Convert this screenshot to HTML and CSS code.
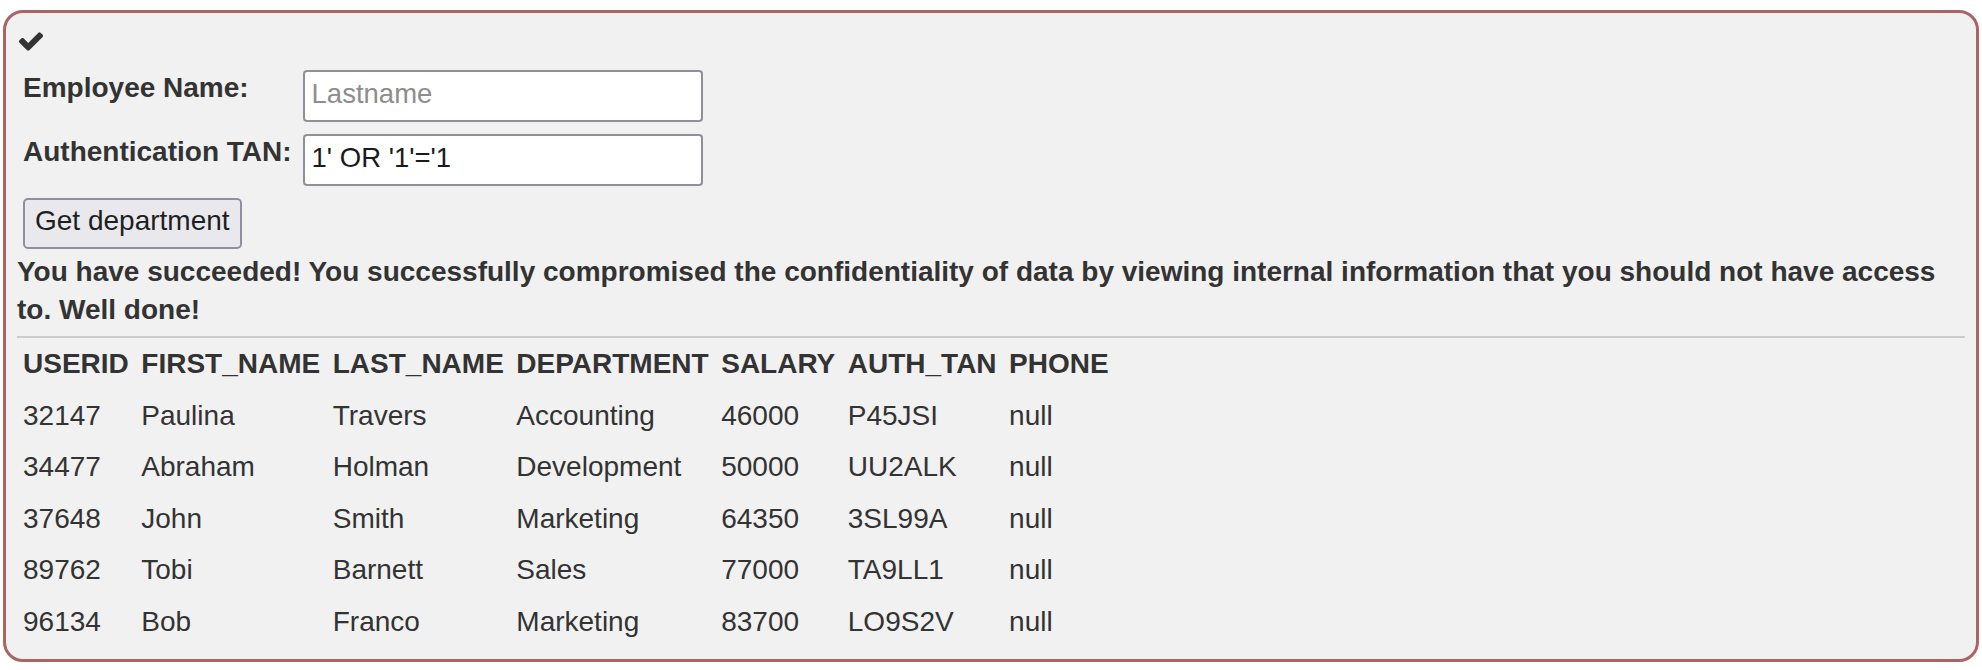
FILE: index.html
```html
<!DOCTYPE html>
<html>
<head>
<meta charset="utf-8">
<link rel="stylesheet" href="styles.css">
</head>
<body>
<div class="attack-container">
  <div class="status">
    <svg class="check" width="28" height="28" viewBox="0 0 1792 1792"><path fill="#333" d="M1671 566q0 40-28 68l-724 724-136 136q-28 28-68 28t-68-28l-136-136-362-362q-28-28-28-68t28-68l136-136q28-28 68-28t68 28l294 295 656-657q28-28 68-28t68 28l136 136q28 28 28 68z"/></svg>
  </div>
  <form class="attack-form">
    <table class="form-table">
      <tr>
        <td class="label-cell"><label>Employee Name:</label></td>
        <td class="input-cell"><input type="text" placeholder="Lastname"></td>
      </tr>
      <tr>
        <td class="label-cell"><label>Authentication TAN:</label></td>
        <td class="input-cell"><input type="text" value="1' OR '1'='1"></td>
      </tr>
      <tr>
        <td class="button-cell"><button type="button">Get department</button></td>
      </tr>
    </table>
  </form>
  <div class="attack-feedback">You have succeeded! You successfully compromised the confidentiality of data by viewing internal information that you should not have access to. Well done!</div>
  <div class="attack-output">
    <hr class="divider">
    <table class="results">
      <tr><th>USERID</th><th>FIRST_NAME</th><th>LAST_NAME</th><th>DEPARTMENT</th><th>SALARY</th><th>AUTH_TAN</th><th>PHONE</th></tr>
      <tr><td>32147</td><td>Paulina</td><td>Travers</td><td>Accounting</td><td>46000</td><td>P45JSI</td><td>null</td></tr>
      <tr><td>34477</td><td>Abraham</td><td>Holman</td><td>Development</td><td>50000</td><td>UU2ALK</td><td>null</td></tr>
      <tr><td>37648</td><td>John</td><td>Smith</td><td>Marketing</td><td>64350</td><td>3SL99A</td><td>null</td></tr>
      <tr><td>89762</td><td>Tobi</td><td>Barnett</td><td>Sales</td><td>77000</td><td>TA9LL1</td><td>null</td></tr>
      <tr><td>96134</td><td>Bob</td><td>Franco</td><td>Marketing</td><td>83700</td><td>LO9S2V</td><td>null</td></tr>
    </table>
  </div>
</div>
</body>
</html>
```
FILE: styles.css
```css
html, body {
  margin: 0;
  padding: 0;
  background: #ffffff;
}
body {
  font-family: "Liberation Sans", Arial, sans-serif;
  font-size: 28px;
  line-height: 40px;
  color: #333333;
}
.attack-container {
  margin: 10px 3px 0 3px;
  border: 3px solid #aa6464;
  border-radius: 20px;
  background: #f1f1f1;
  padding: 0 11px 12px 11px;
}
.status {
  box-sizing: border-box;
  height: 55px;
  padding-top: 14px;
}
.check {
  display: block;
}
.attack-form {
  margin: 0;
}
.form-table {
  border-collapse: collapse;
  border-spacing: 0;
}
.form-table td {
  padding: 0;
  vertical-align: top;
}
.label-cell {
  padding: 0 6px 10px 6px !important;
}
.label-cell label {
  font-weight: bold;
  display: block;
}
.input-cell {
  padding: 2px 0 10px 5px !important;
}
.input-cell input {
  display: block;
  box-sizing: border-box;
  width: 400px;
  height: 52px;
  margin: 0;
  padding: 0 6px 5px 7px;
  border: 2px solid #8f8f9d;
  border-radius: 4px;
  background: #ffffff;
  font-family: "Liberation Sans", Arial, sans-serif;
  font-size: 27.5px;
  color: #1a1a1a;
  outline: none;
}
.input-cell input::placeholder {
  color: #8d8d8d;
  opacity: 1;
}
.button-cell {
  padding: 2px 0 3px 6px !important;
}
.button-cell button {
  display: block;
  box-sizing: border-box;
  height: 51px;
  margin: 0;
  padding: 0 10px 6px 10px;
  border: 2px solid #8f8f9d;
  border-radius: 5px;
  background: #e9e9ed;
  font-family: "Liberation Sans", Arial, sans-serif;
  font-size: 28px;
  line-height: 32px;
  color: #1f1f1f;
}
.attack-feedback {
  margin-top: 0.5px;
  font-weight: bold;
  line-height: 38px;
}
.divider {
  margin: 7.5px 0 0 0;
  border: 0;
  border-top: 2px solid #cccccc;
  height: 0;
}
.results {
  border-collapse: collapse;
  border-spacing: 0;
}
.results th,
.results td {
  padding: 6px 6.5px 6px 6px;
  line-height: 39.5px;
  text-align: left;
  white-space: nowrap;
}
.results th {
  font-weight: bold;
}
```
